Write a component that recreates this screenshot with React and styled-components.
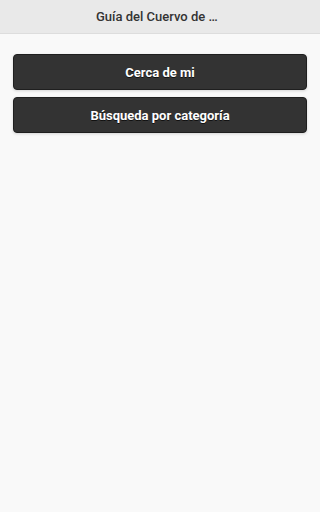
import styled, { createGlobalStyle } from 'styled-components';

const GlobalStyle = createGlobalStyle`
  html, body {
    margin: 0;
    padding: 0;
    background: #f9f9f9;
    font-family: Roboto, "Noto Sans", sans-serif;
  }
`;

const Page = styled.div`
  min-height: 512px;
  background: #f9f9f9;
`;

const Header = styled.header`
  height: 34px;
  display: flex;
  align-items: center;
  justify-content: center;
  background: #e9e9e9;
  border-bottom: 1px solid #ddd;
  box-sizing: border-box;
`;

const Title = styled.h1`
  margin: 0;
  width: 40%;
  text-align: center;
  font-size: 13px;
  font-weight: 500;
  color: #333;
  white-space: nowrap;
  overflow: hidden;
  text-overflow: ellipsis;
`;

const Content = styled.main`
  display: flex;
  flex-direction: column;
  gap: 7px;
  padding: 20px 13px;
`;

const Button = styled.button`
  height: 36px;
  width: 100%;
  background: #333;
  border: 1px solid #1f1f1f;
  border-radius: 4px;
  color: #fff;
  font-family: Roboto, "Noto Sans", sans-serif;
  font-size: 13px;
  font-weight: 700;
  text-shadow: 0 1px 0 #111;
  box-shadow: 0 1px 3px rgba(0, 0, 0, 0.15);
  cursor: pointer;
`;

export default function App() {
  return (
    <Page>
      <GlobalStyle />
      <Header>
        <Title title="Guía del Cuervo de Madrid">Guía del Cuervo de Madrid</Title>
      </Header>
      <Content>
        <Button>Cerca de mi</Button>
        <Button>Búsqueda por categoría</Button>
      </Content>
    </Page>
  );
}
